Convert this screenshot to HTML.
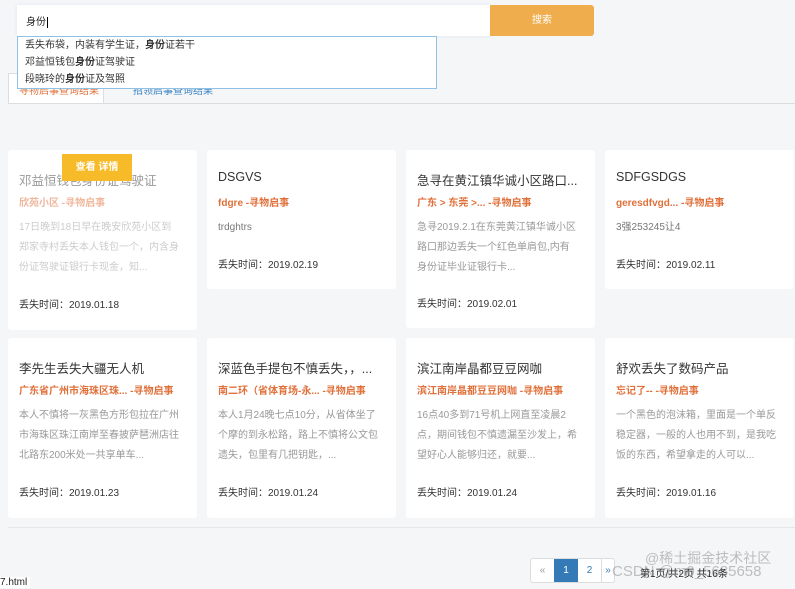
<!DOCTYPE html>
<html><head><meta charset="utf-8"><style>
*{margin:0;padding:0;box-sizing:border-box}
body{width:795px;height:589px;background:#f5f6f8;font-family:"Liberation Sans","Noto Sans CJK SC",sans-serif;position:relative;overflow:hidden;color:#333}
.a{position:absolute}
.card{position:absolute;background:#fff;width:189px;border-radius:3px}
.card .t{position:absolute;left:11px;top:20px;font-size:12.5px;color:#333;white-space:nowrap}
.card .s{position:absolute;left:11px;top:44px;font-size:10px;font-weight:bold;color:#e0703a;white-space:nowrap}
.card .d{position:absolute;left:11px;top:68px;width:162px;font-size:10px;line-height:20px;color:#999}
.card .m{position:absolute;left:11px;font-size:10px;color:#333}
.f .t,.f .s,.f .d{opacity:.5}
</style></head><body>
<div class="a" style="left:17px;top:5px;width:473px;height:31px;background:#fff;box-shadow:0 0 4px #dde6f0"></div>
<div class="a" style="left:26px;top:13px;font-size:10px;color:#222">身份<span style="border-left:1px solid #000;margin-left:1px"></span></div>
<div class="a" style="left:490px;top:5px;width:104px;height:31px;background:#efad4d;border-radius:0 3px 3px 0;color:#fff;font-size:10px;text-align:center;line-height:31px">搜索</div>
<div class="a" style="left:8px;top:73px;width:96px;height:31px;background:#fff;border:1px solid #ddd;border-bottom:none;color:#e0703a;font-size:10px;padding:8px 0 0 10px">寻物启事查询结果</div>
<div class="a" style="left:133px;top:82px;color:#3a83c4;font-size:10px">招领启事查询结果</div>
<div class="a" style="left:8px;top:103px;width:787px;height:1px;background:#ddd"></div>
<div class="a" style="left:17px;top:36px;width:420px;height:53px;background:#fff;border:1px solid #8ec1e3;font-size:10px;line-height:17px;padding-left:7px;color:#333">
<div>丢失布袋，内装有学生证，<b>身份</b>证若干</div><div>邓益恒钱包<b>身份</b>证驾驶证</div><div>段晓玲的<b>身份</b>证及驾照</div></div>

<div class="card f" style="left:8px;top:150px;height:180px"><div class="t">邓益恒钱包身份证驾驶证</div><div class="s">欣苑小区 -寻物启事</div><div class="d">17日晚到18日早在晚安欣苑小区到郑家寺村丢失本人钱包一个，内含身份证驾驶证银行卡现金，知...</div><div class="m" style="top:146px">丢失时间：2019.01.18</div></div>
<div class="a" style="left:62px;top:154px;width:70px;height:27px;background:#f7bb2a;color:#fff;font-size:10px;font-weight:bold;text-align:center;line-height:27px">查看 详情</div>

<div class="card" style="left:207px;top:150px;height:139px"><div class="t">DSGVS</div><div class="s">fdgre -寻物启事</div><div class="d" style="color:#777">trdghtrs</div><div class="m" style="top:106px">丢失时间：2019.02.19</div></div>
<div class="card" style="left:406px;top:150px;height:178px"><div class="t">急寻在黄江镇华诚小区路口...</div><div class="s">广东 &gt; 东莞 &gt;... -寻物启事</div><div class="d">急寻2019.2.1在东莞黄江镇华诚小区路口那边丢失一个红色单肩包,内有身份证毕业证银行卡...</div><div class="m" style="top:145px">丢失时间：2019.02.01</div></div>
<div class="card" style="left:605px;top:150px;height:139px"><div class="t">SDFGSDGS</div><div class="s">geresdfvgd... -寻物启事</div><div class="d" style="color:#777">3强253245让4</div><div class="m" style="top:106px">丢失时间：2019.02.11</div></div>

<div class="card" style="left:8px;top:338px;height:180px"><div class="t">李先生丢失大疆无人机</div><div class="s">广东省广州市海珠区珠... -寻物启事</div><div class="d">本人不慎将一灰黑色方形包拉在广州市海珠区珠江南岸至春披萨琶洲店往北路东200米处一共享单车...</div><div class="m" style="top:146px">丢失时间：2019.01.23</div></div>
<div class="card" style="left:207px;top:338px;height:180px"><div class="t">深蓝色手提包不慎丢失，，...</div><div class="s">南二环（省体育场-永... -寻物启事</div><div class="d">本人1月24晚七点10分，从省体坐了个摩的到永松路，路上不慎将公文包遗失，包里有几把钥匙，...</div><div class="m" style="top:146px">丢失时间：2019.01.24</div></div>
<div class="card" style="left:406px;top:338px;height:180px"><div class="t">滨江南岸晶都豆豆网咖</div><div class="s">滨江南岸晶都豆豆网咖 -寻物启事</div><div class="d">16点40多到71号机上网直至凌晨2点，期间钱包不慎遗漏至沙发上，希望好心人能够归还，就要...</div><div class="m" style="top:146px">丢失时间：2019.01.24</div></div>
<div class="card" style="left:605px;top:338px;height:180px"><div class="t">舒欢丢失了数码产品</div><div class="s">忘记了-- -寻物启事</div><div class="d">一个黑色的泡沫箱，里面是一个单反稳定器，一般的人也用不到，是我吃饭的东西，希望拿走的人可以...</div><div class="m" style="top:146px">丢失时间：2019.01.16</div></div>

<div class="a" style="left:8px;top:527px;width:787px;height:1px;background:#e6e6e6"></div>
<div class="a" style="left:530px;top:558px;height:25px;display:flex;font-size:10px;border:1px solid #ddd;border-radius:3px;background:#fff">
<div style="width:23px;text-align:center;line-height:23px;color:#999">«</div>
<div style="width:24px;text-align:center;line-height:23px;background:#337ab7;color:#fff">1</div>
<div style="width:24px;text-align:center;line-height:23px;color:#337ab7;border-right:1px solid #ddd">2</div>
<div style="width:12px;text-align:center;line-height:23px;color:#337ab7">»</div></div>
<div class="a" style="left:640px;top:565px;font-size:10px;color:#222">第1页/共2页 共16条</div>
<div class="a" style="left:645px;top:548px;font-size:14px;color:rgba(120,120,120,.45);white-space:nowrap">@稀土掘金技术社区</div>
<div class="a" style="left:612px;top:563px;font-size:15px;color:rgba(120,120,120,.45);white-space:nowrap">CSDN @m0_5685658</div>
<div class="a" style="left:0;top:577px;font-size:10px;color:#222;background:#fff;padding:0 3px 0 0">7.html</div>
</body></html>
